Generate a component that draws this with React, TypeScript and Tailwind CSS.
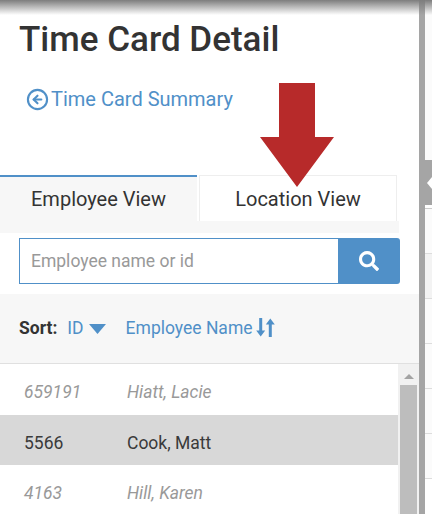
import { CircleArrowLeft } from "lucide-react";
import { FaSearch } from "react-icons/fa";

const employees = [
  { id: "659191", name: "Hiatt, Lacie", selected: false },
  { id: "5566", name: "Cook, Matt", selected: true },
  { id: "4163", name: "Hill, Karen", selected: false },
];

const sideRows = [false, true, false, false, false, false];

export default function App() {
  return (
    <div className="relative flex h-[514px] w-[432px] overflow-hidden bg-white font-['Roboto',sans-serif] text-[#333]">
      <div className="flex w-[419px] flex-col">
        <h1 className="pt-[18px] pl-[19px] text-[35px] leading-[44px] font-medium">
          Time Card Detail
        </h1>
        <a className="mt-[23px] ml-[26px] flex h-[28px] items-center gap-[2px] text-[20px] text-[#5090c8]">
          <CircleArrowLeft size={23} strokeWidth={2.2} />
          <span>Time Card Summary</span>
        </a>

        <div className="mt-[62px] flex w-[399px] items-start bg-white">
          <div className="flex h-[46px] w-[197px] items-center justify-center border-t-2 border-[#5090c8] bg-[#f7f7f7] text-[20px]">
            Employee View
          </div>
          <div className="ml-[2px] flex h-[46px] w-[198px] items-center justify-center border border-b-0 border-[#eeeeee] text-[20px]">
            Location View
          </div>
        </div>
        <div className="h-[12px] w-[399px] bg-[#f7f7f7]" />

        <div className="mt-[5px] ml-[19px] flex h-[46px] w-[381px]">
          <div className="flex w-[320px] items-center border border-[#5090c8] pl-[11px] text-[17.5px] text-[#999]">
            Employee name or id
          </div>
          <div className="-ml-px flex w-[62px] items-center justify-center rounded-r-[3px] bg-[#5090c8] text-white">
            <FaSearch size={20} />
          </div>
        </div>

        <div className="mt-[10px] flex h-[70px] items-center border-b border-[#e0e0e0] bg-[#f7f7f7] pl-[19px] text-[17.5px]">
          <span className="font-bold">Sort:</span>
          <span className="ml-[10px] text-[#5090c8]">ID</span>
          <svg width="17" height="10" viewBox="0 0 17 10" className="ml-[5px] text-[#5090c8]">
            <polygon points="0,0 17,0 8.5,10" fill="currentColor" />
          </svg>
          <span className="ml-[20px] text-[#5090c8]">Employee Name</span>
          <svg width="19" height="19" viewBox="0 0 19 19" className="mb-[2px] ml-[3px] text-[#5090c8]">
            <path d="M3.2 0h3v12.5h3l-4.5 6-4.5-6h3z M12.8 19h3V6.5h3L14.3 0.5 9.8 6.5h3z" fill="currentColor" />
          </svg>
        </div>

        <div className="flex min-h-0 flex-1">
          <div className="w-[398px]">
            {employees.map((employee) => (
              <div
                key={employee.id}
                className={
                  employee.selected
                    ? "flex h-[50px] items-center bg-[#d8d8d8] pt-[6px] text-[17.5px] text-[#3a3a3a]"
                    : "flex h-[51px] items-center pt-[6px] text-[17.5px] text-[#999] italic"
                }
              >
                <span className="w-[127px] pl-[24px]">{employee.id}</span>
                <span>{employee.name}</span>
              </div>
            ))}
          </div>
          <div className="flex w-[21px] flex-col items-center bg-[#f1f1f1]">
            <svg width="10" height="5" viewBox="0 0 10 5" className="mt-[10px] mb-[6px] shrink-0">
              <polygon points="5,0 10,5 0,5" fill="#a3a3a3" />
            </svg>
            <div className="w-[17px] flex-1 bg-[#bdbdbd]" />
          </div>
        </div>
      </div>

      <div className="w-[6px] bg-[#a5a5a5]" />

      <div className="flex w-[7px] flex-col bg-white">
        <div className="h-[160px] bg-[#fbfbfb]" />
        <div className="flex h-[45px] items-center justify-end bg-[#a5a5a5]">
          <svg width="5" height="12" viewBox="0 0 5 12">
            <polygon points="5,0 5,12 0,6" fill="white" />
          </svg>
        </div>
        <div className="h-[4px] border-b border-[#cccccc]" />
        {sideRows.map((shaded, index) => (
          <div
            key={index}
            className={
              shaded
                ? "h-[45px] shrink-0 border-b border-[#dddddd] bg-[#f3f3f3]"
                : "h-[45px] shrink-0 border-b border-[#dddddd] bg-[#fbfbfb]"
            }
          />
        ))}
      </div>

      {/* red callout arrow drawn over the tabs */}
      <svg width="74" height="104" viewBox="0 0 74 104" className="absolute top-[83px] left-[260px]">
        <polygon points="19,0 55,0 55,54 74,54 37,104 0,54 19,54" fill="#b72a2a" />
      </svg>

      {/* header shadow falling over the page */}
      <div className="absolute inset-x-0 top-0 h-[15px] bg-gradient-to-b from-[#7d7d7d] to-transparent" />
    </div>
  );
}
